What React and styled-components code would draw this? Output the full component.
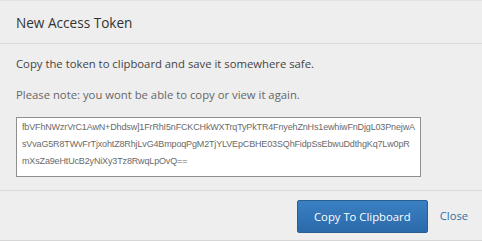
import styled, { createGlobalStyle } from 'styled-components';

const Global = createGlobalStyle`
	html, body {
		margin: 0;
		padding: 0;
		background: #eeeeee;
	}
	body {
		font-family: 'Open Sans', 'Liberation Sans', sans-serif;
	}
`;

const Modal = styled.div`
	width: 482px;
	height: 241px;
	box-sizing: border-box;
	background: #eeeeee;
	border-bottom: 1px solid #d6d6d6;
	display: flex;
	flex-direction: column;
`;

const Header = styled.div`
	height: 44px;
	box-sizing: border-box;
	padding: 0 16px;
	display: flex;
	align-items: center;
	border-top: 1px solid #e2e2e2;
	border-bottom: 1px solid #d9d9d9;
`;

const Title = styled.h3`
	margin: 0;
	font-size: 13.6px;
	font-weight: 400;
	color: #333;
`;

const Body = styled.div`
	padding: 12px 16px 0;
	height: 147px;
	box-sizing: border-box;
	border-bottom: 1px solid #d9d9d9;
`;

const Text = styled.p`
	margin: 0 0 15px;
	font-size: 11.3px;
	line-height: 16px;
	color: ${(p) => (p.muted ? '#666' : '#444')};
`;

const TokenBox = styled.div`
	width: 405px;
	height: 60px;
	box-sizing: border-box;
	margin-top: -1px;
	background: #fff;
	border: 1px solid #8e8e8e;
	padding: 1px 5px 0;
	font-family: 'Liberation Sans', sans-serif;
	font-size: 9px;
	line-height: 17px;
	color: #6a6a6a;
	word-break: break-all;
	overflow: hidden;
	letter-spacing: -0.15px;
`;

const Footer = styled.div`
	flex: 1;
	display: flex;
	justify-content: flex-end;
	align-items: center;
	padding: 0 14px 0 0;
	gap: 12px;
`;

const Button = styled.button`
	width: 131px;
	height: 33px;
	box-sizing: border-box;
	border: 1px solid #2a5f92;
	border-radius: 2px;
	background: linear-gradient(#3a80c2, #2b6aab);
	color: #fff;
	font-family: 'Open Sans', 'Liberation Sans', sans-serif;
	font-size: 11.3px;
	padding: 0;
	margin-top: 1px;
`;

const LinkText = styled.a`
	font-size: 11.2px;
	color: #2f6ea8;
	text-decoration: none;
`;

const token =
	'fbVFhNWzrVrC1AwN+Dhdsw]1FrRhI5nFCKCHkWXTrqTyPkTR4FnyehZnHs1ewhiwFnDjgL03PnejwAsVvaG5R8TWvFrTjxohtZ8RhjLvG4BmpoqPgM2TjYLVEpCBHE03SQhFidpSsEbwuDdthgKq7Lw0pRmXsZa9eHtUcB2yNiXy3Tz8RwqLpOvQ==';

export default function App() {
	return (
		<>
			<Global />
			<Modal>
				<Header>
					<Title>New Access Token</Title>
				</Header>
				<Body>
					<Text>Copy the token to clipboard and save it somewhere safe.</Text>
					<Text muted>Please note: you wont be able to copy or view it again.</Text>
					<TokenBox>{token}</TokenBox>
				</Body>
				<Footer>
					<Button>Copy To Clipboard</Button>
					<LinkText href="#">Close</LinkText>
				</Footer>
			</Modal>
		</>
	);
}
